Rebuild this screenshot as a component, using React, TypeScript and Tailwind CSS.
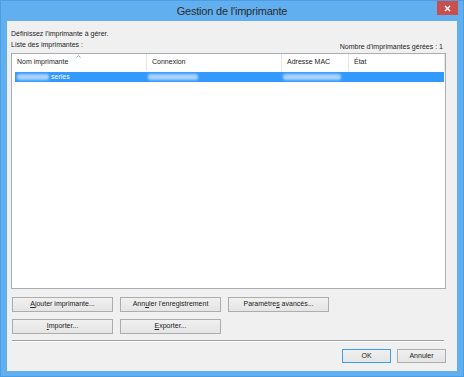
import React from 'react';

const FONT = { fontFamily: '"Liberation Sans", Arial, sans-serif' };

// Small gray push button, Windows 8 style.
const Btn: React.FC<{ label: React.ReactNode; className?: string; primary?: boolean }> = ({ label, className = '', primary }) => (
  <div
    className={`flex items-center justify-center border bg-gradient-to-b from-[#f0f0f0] to-[#e5e5e5] text-[7px] text-[#222] ${
      primary ? 'border-[#3c9ef0]' : 'border-[#adadad]'
    } ${className}`}
  >
    <span>{label}</span>
  </div>
);

const columns = [
  { name: 'Nom imprimante', w: 'w-[135px]' },
  { name: 'Connexion', w: 'w-[135px]' },
  { name: 'Adresse MAC', w: 'w-[67px]' },
  { name: 'État', w: 'flex-1' },
];

export default function App() {
  return (
    <div className="w-[464px] h-[377px] bg-[#62aff0] flex flex-col border border-[#4b9ee6]" style={FONT}>
      {/* Title bar */}
      <div className="relative h-[20px] flex items-center justify-center">
        <span className="text-[11px] text-[#2b2b2b] tracking-[-0.2px]">Gestion de l'imprimante</span>
        <div className="absolute right-[5px] top-0 w-[21px] h-[14px] bg-[#c9504f] flex items-center justify-center">
          <svg width="7" height="7" viewBox="0 0 7 7">
            <path d="M1 1L6 6M6 1L1 6" stroke="white" strokeWidth="1.4" />
          </svg>
        </div>
      </div>

      {/* Client area */}
      <div className="flex-1 mx-[6px] mb-[5px] bg-[#f0f0f0] flex flex-col px-[4px] text-[7px] text-[#1e1e1e]">
        <div className="mt-[9px] leading-[8px]">Définissez l'imprimante à gérer.</div>
        <div className="mt-[3px] flex justify-between leading-[8px]">
          <span>Liste des imprimantes :</span>
          <span className="mt-[2px] mr-[10px]">Nombre d'imprimantes gérées : 1</span>
        </div>

        {/* Printer list */}
        <div className="mt-[2px] h-[236px] mr-[7px] border border-[#abadb3] bg-white flex flex-col">
          <div className="flex h-[17px] bg-white">
            {columns.map((c, i) => (
              <div key={c.name} className={`${c.w} relative flex items-center pl-[5px] border-r border-[#e5e5e5]`}>
                {i === 0 && (
                  <svg className="absolute left-[64px] top-[1px]" width="5" height="3" viewBox="0 0 5 3">
                    <path d="M0.5 2.5L2.5 0.5L4.5 2.5" stroke="#9aa6b5" strokeWidth="0.9" fill="none" />
                  </svg>
                )}
                {c.name}
              </div>
            ))}
          </div>
          <div className="ml-[3px] mr-[1px] mt-[1px] h-[10px] bg-[#3399ff] flex items-center text-white">
            <div className="w-[131px] flex items-center pl-[2px]">
              <span className="w-[32px] h-[6px] bg-[#a9d2fb] rounded-[2px] blur-[1px]" />
              <span className="ml-[2px]">series</span>
            </div>
            <div className="w-[135px] flex items-center pl-[2px]">
              <span className="w-[50px] h-[6px] bg-[#a9d2fb] rounded-[2px] blur-[1px]" />
            </div>
            <div className="flex items-center pl-[2px]">
              <span className="w-[58px] h-[6px] bg-[#a9d2fb] rounded-[2px] blur-[1px]" />
            </div>
          </div>
        </div>

        {/* Action buttons */}
        <div className="mt-[8px] ml-[1px] flex gap-[7px]">
          <Btn className="w-[101px] h-[15px]" label={<><span className="underline">A</span>jouter imprimante...</>} />
          <Btn className="w-[101px] h-[15px]" label={<>Ann<span className="underline">u</span>ler l'enregistrement</>} />
          <Btn className="w-[101px] h-[15px]" label={<>Paramètre<span className="underline">s</span> avancés...</>} />
        </div>
        <div className="mt-[7px] ml-[1px] flex gap-[7px]">
          <Btn className="w-[101px] h-[15px]" label={<><span className="underline">I</span>mporter...</>} />
          <Btn className="w-[101px] h-[15px]" label={<><span className="underline">E</span>xporter...</>} />
        </div>

        <div className="mt-[6px] ml-[1px] mr-[9px] h-[1px] bg-[#a0a0a0] border-b border-white box-content" />

        <div className="mt-[7px] mr-[7px] flex justify-end gap-[6px]">
          <Btn primary className="w-[49px] h-[14px]" label="OK" />
          <Btn className="w-[49px] h-[14px]" label="Annuler" />
        </div>
      </div>
    </div>
  );
}
